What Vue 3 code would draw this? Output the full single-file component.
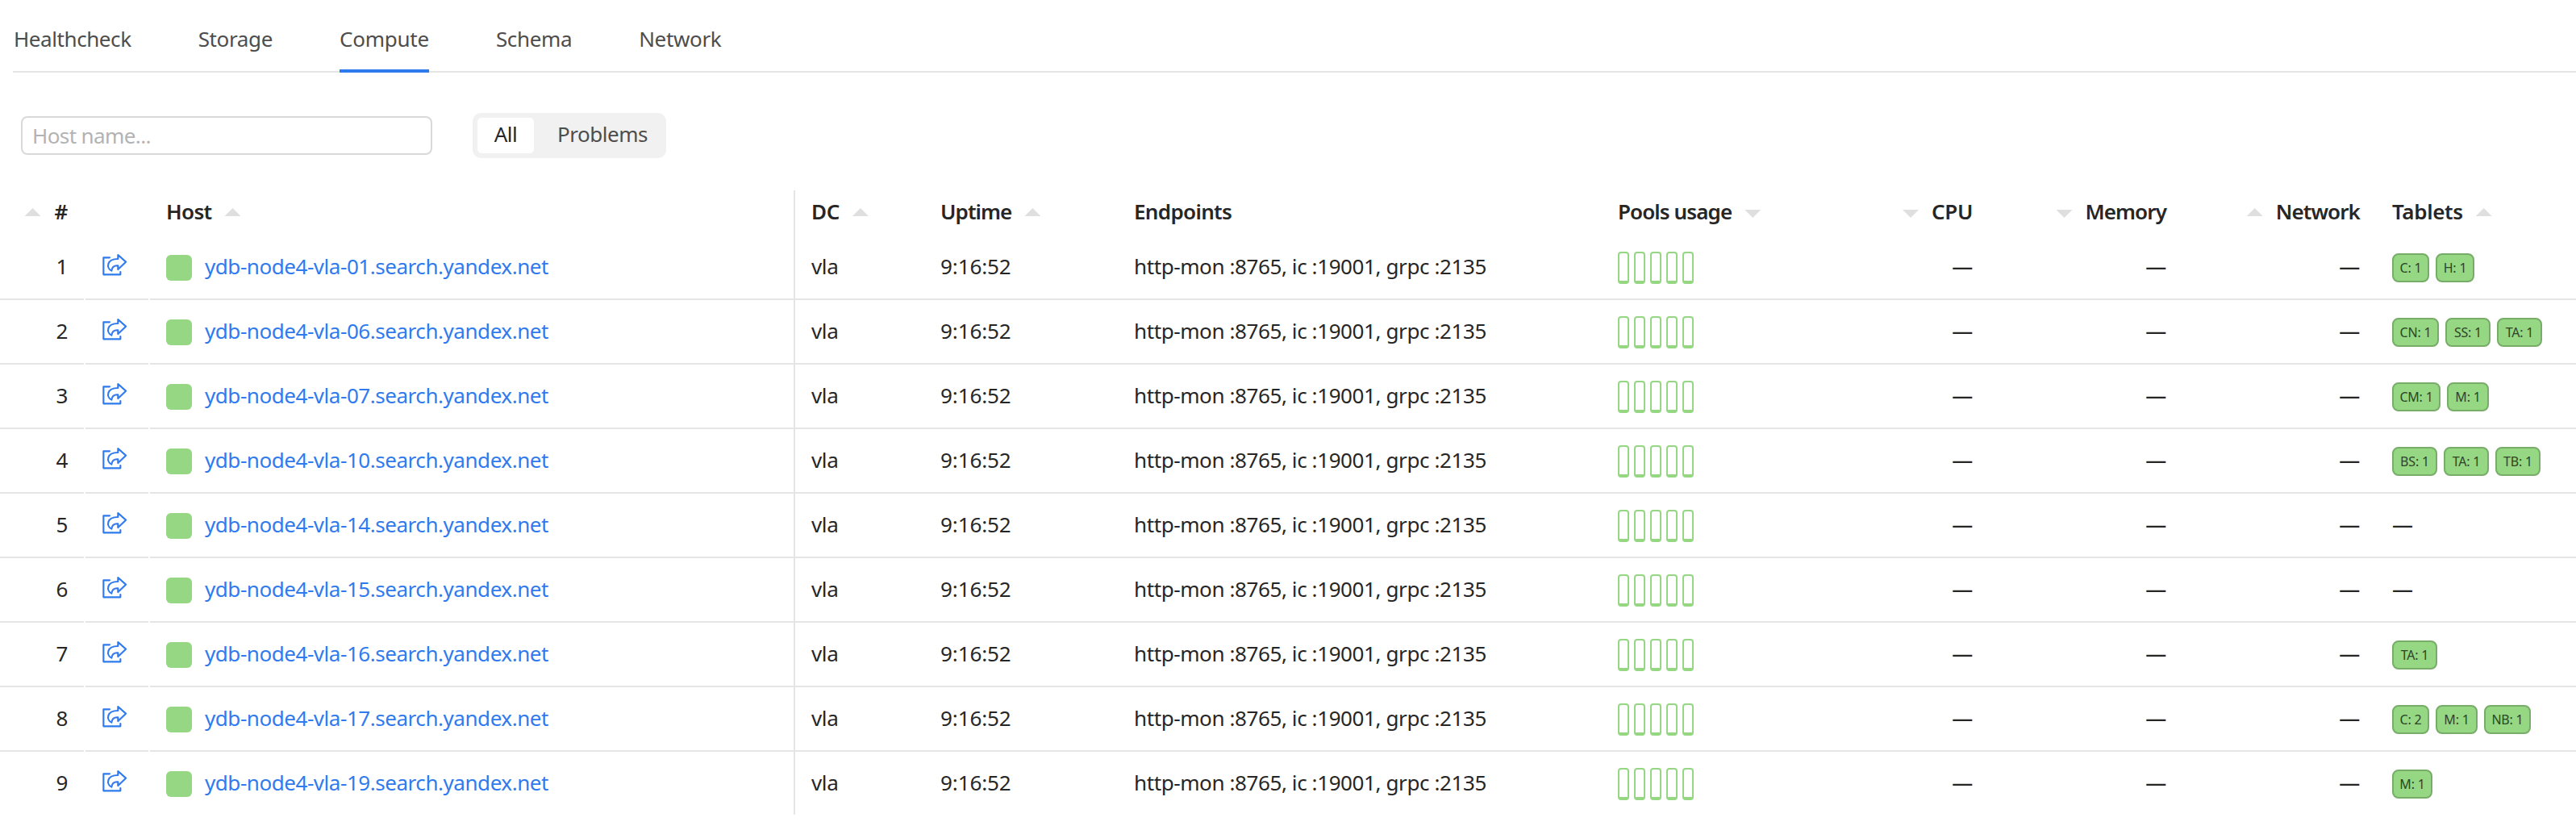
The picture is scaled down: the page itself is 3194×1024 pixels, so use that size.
<script setup>
const tabs = ['Healthcheck', 'Storage', 'Compute', 'Schema', 'Network']
const activeTab = 'Compute'

const columns = [
  { key: 'num', title: '#', sort: 'up', right: true },
  { key: 'link', title: '' },
  { key: 'host', title: 'Host', sort: 'up' },
  { key: 'dc', title: 'DC', sort: 'up' },
  { key: 'uptime', title: 'Uptime', sort: 'up' },
  { key: 'endpoints', title: 'Endpoints' },
  { key: 'pools', title: 'Pools usage', sort: 'down' },
  { key: 'cpu', title: 'CPU', sort: 'down', right: true },
  { key: 'memory', title: 'Memory', sort: 'down', right: true },
  { key: 'network', title: 'Network', sort: 'up', right: true },
  { key: 'tablets', title: 'Tablets', sort: 'up' },
]

const widths = { C: 46, H: 48, M: 52, CN: 58, SS: 56, TA: 56, CM: 60, BS: 56, TB: 56, NB: 58 }

const nodes = [
  { id: '01', tablets: ['C: 1', 'H: 1'] },
  { id: '06', tablets: ['CN: 1', 'SS: 1', 'TA: 1'] },
  { id: '07', tablets: ['CM: 1', 'M: 1'] },
  { id: '10', tablets: ['BS: 1', 'TA: 1', 'TB: 1'] },
  { id: '14', tablets: [] },
  { id: '15', tablets: [] },
  { id: '16', tablets: ['TA: 1'] },
  { id: '17', tablets: ['C: 2', 'M: 1', 'NB: 1'] },
  { id: '19', tablets: ['M: 1'] },
]

const tabletWidth = (label, index) => {
  const type = label.split(':')[0]
  return (type === 'M' && index === 0 ? 50 : widths[type]) + 'px'
}
</script>

<template>
  <div class="page">
    <nav class="tabs">
      <a v-for="t in tabs" :key="t" class="tab" :class="{ active: t === activeTab }">{{ t }}</a>
    </nav>

    <div class="controls">
      <input class="search" type="text" placeholder="Host name..." />
      <div class="radio">
        <span class="option checked">All</span>
        <span class="option">Problems</span>
      </div>
    </div>

    <div class="table">
      <div class="row head">
        <div v-for="c in columns" :key="c.key" class="cell" :class="[c.key, { right: c.right }]">
          <i v-if="c.sort && c.right" class="sort" :class="c.sort"></i>
          <span class="text">{{ c.title }}</span>
          <i v-if="c.sort && !c.right" class="sort" :class="c.sort"></i>
        </div>
      </div>

      <div v-for="(n, i) in nodes" :key="n.id" class="row">
        <div class="cell num right"><span class="text">{{ i + 1 }}</span></div>
        <div class="cell link">
          <svg class="share" width="32" height="28" viewBox="48 42 96 84">
            <path d="M78 58H55V121H118V111" />
            <path d="M109 48L138 74L109 102V88C96 87 87 92 85 107C65 97 65 63 109 63Z" />
          </svg>
        </div>
        <div class="cell host">
          <i class="status"></i>
          <a class="text">ydb-node4-vla-{{ n.id }}.search.yandex.net</a>
        </div>
        <div class="cell dc"><span class="text">vla</span></div>
        <div class="cell uptime"><span class="text">9:16:52</span></div>
        <div class="cell endpoints"><span class="text">http-mon :8765, ic :19001, grpc :2135</span></div>
        <div class="cell pools"><i v-for="p in 5" :key="p" class="pool"></i></div>
        <div class="cell cpu right"><span class="text dash">—</span></div>
        <div class="cell memory right"><span class="text dash">—</span></div>
        <div class="cell network right"><span class="text dash">—</span></div>
        <div class="cell tablets">
          <span
            v-for="(t, k) in n.tablets"
            :key="t"
            class="tablet"
            :style="{ width: tabletWidth(t, k) }"
          >{{ t }}</span>
          <span v-if="!n.tablets.length" class="text dash">—</span>
        </div>
      </div>
    </div>
  </div>
</template>

<style>
body {
  background: #fff;
  overflow: hidden;
}
</style>

<style scoped>
.page {
  width: 3194px;
  height: 1024px;
  overflow: hidden;
  box-sizing: border-box;
  font-family: "Noto Sans", "Open Sans", sans-serif;
  font-size: 26px;
  line-height: 36px;
  letter-spacing: -0.35px;
  color: #262626;
}
.tabs {
  display: flex;
  gap: 83px;
  height: 90px;
  margin-left: 16px;
  padding-left: 1px;
  box-sizing: border-box;
  box-shadow: inset 0 -2px #e5e5e5;
}
.tab {
  height: 90px;
  padding-top: 30px;
  box-sizing: border-box;
  color: #4d4d4d;
}
.tab:first-child {
  letter-spacing: -0.42px;
}
.tab.active {
  letter-spacing: -0.25px;
  border-bottom: 4px solid #2f7bee;
}
.controls {
  display: flex;
  align-items: center;
  gap: 50px;
  padding: 50px 26px 40px;
}
.search {
  width: 510px;
  height: 48px;
  box-sizing: border-box;
  margin: 0;
  padding: 0 12px 0;
  border: 2px solid #d9d9d9;
  border-radius: 8px;
  font: inherit;
  letter-spacing: -0.6px;
  outline: none;
}
.search::placeholder {
  color: #b3b3b3;
  opacity: 1;
}
.radio {
  display: flex;
  width: 240px;
  height: 56px;
  padding: 6px;
  box-sizing: border-box;
  border-radius: 10px;
  background: #f1f1f1;
}
.option {
  flex: 1;
  height: 44px;
  padding-left: 12px;
  line-height: 41px;
  border-radius: 5px;
  text-align: center;
  letter-spacing: -0.45px;
  color: #4d4d4d;
}
.option.checked {
  flex: 0 0 70px;
  box-sizing: border-box;
  padding-left: 0;
  background: #fff;
  color: #262626;
}
.row {
  display: flex;
  height: 80px;
}
.row.head {
  height: 56px;
  font-weight: 600;
}
.row:last-child {
  height: 78px;
}
.cell {
  display: flex;
  align-items: center;
  flex: none;
  box-sizing: border-box;
  padding: 2px 20px 0;
  border-bottom: 2px solid #e5e5e5;
  white-space: nowrap;
}
.head .cell {
  padding-top: 0;
  border-bottom: 0;
}
.row:last-child .cell {
  border-bottom: 0;
}
.right {
  justify-content: flex-end;
}
.text {
  margin-top: -4px;
}
.num {
  width: 104px;
  margin-right: 2px;
}
.link {
  width: 78px;
  margin-right: 2px;
}
.host {
  width: 800px;
  border-right: 2px solid #e5e5e5;
}
.dc {
  width: 160px;
}
.uptime {
  width: 240px;
}
.endpoints {
  width: 600px;
}
.pools {
  width: 300px;
}
.cpu {
  width: 180px;
}
.memory,
.network {
  width: 240px;
}
.tablets {
  width: 248px;
}
.row:not(.head) .pools {
  gap: 6px;
}
.row:not(.head) .tablets {
  gap: 8px;
}
.sort {
  flex: none;
  width: 20px;
  height: 10px;
  margin: -2px 16px 0;
  background: #dfdfdf;
  clip-path: polygon(50% 0, 100% 100%, 0 100%);
}
.sort.down {
  margin-top: 2px;
  clip-path: polygon(0 0, 100% 0, 50% 100%);
}
.num .sort {
  margin-left: 0;
  margin-right: 17px;
}
.share {
  flex: none;
  margin-top: -8px;
  fill: none;
  stroke: #2f7bee;
  stroke-width: 6.4;
  stroke-linejoin: round;
  stroke-linecap: round;
}
.status {
  width: 32px;
  height: 32px;
  margin-right: 16px;
  border-radius: 6px;
  background: #95d783;
}
.host a.text {
  color: #2f7bee;
  letter-spacing: -0.45px;
}
.endpoints .text {
  letter-spacing: -0.4px;
}
.uptime .text {
  letter-spacing: -0.1px;
}
.head .host .text,
.head .endpoints .text {
  letter-spacing: -0.65px;
}
.head .uptime .text,
.head .pools .text,
.head .memory .text,
.head .network .text {
  letter-spacing: -0.9px;
}
.dash {
  font-weight: 500;
}
.pool {
  width: 14px;
  height: 40px;
  box-sizing: border-box;
  border: 2px solid #95d783;
  border-bottom-width: 4px;
  border-radius: 4px;
}
.tablet {
  height: 36px;
  box-sizing: border-box;
  border: 2px solid #77ac69;
  border-radius: 8px;
  background: #95d783;
  font-size: 16px;
  line-height: 32px;
  letter-spacing: -0.2px;
  text-align: center;
  color: #2f4429;
}
</style>
